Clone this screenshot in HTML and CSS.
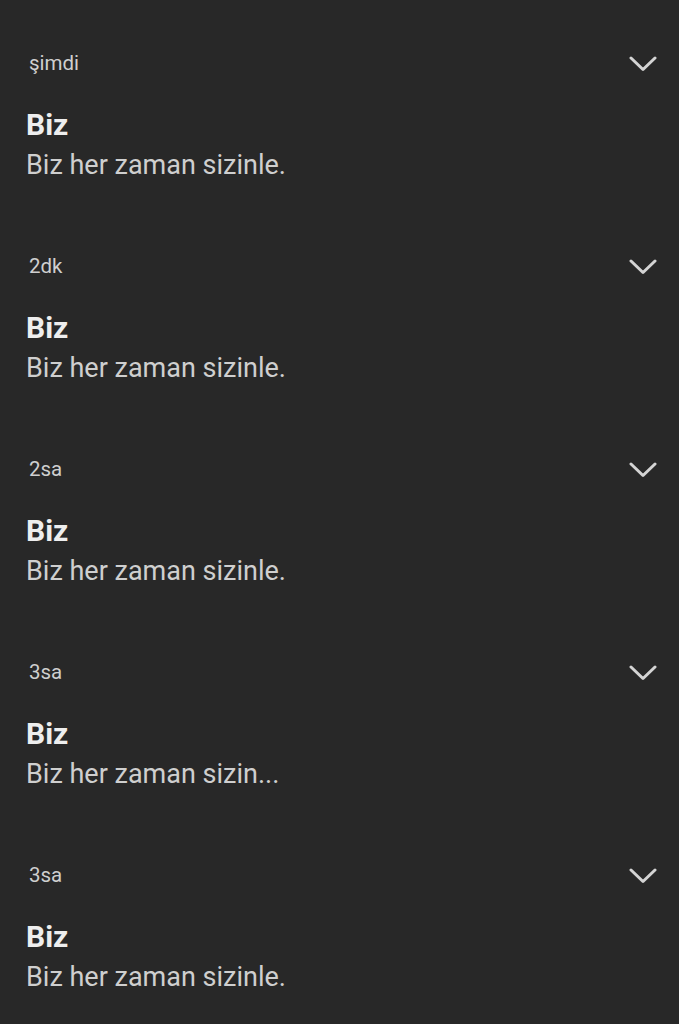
FILE: index.html
```html
<!DOCTYPE html>
<html lang="tr">
<head>
<meta charset="utf-8">
<link rel="stylesheet" href="styles.css">
</head>
<body>
<ul class="list">
  <li class="item">
    <div class="head"><span class="time">şimdi</span><svg class="chev" viewBox="0 0 28 16"><path d="M2 2 L14 13.5 L26 2"/></svg></div>
    <div class="title">Biz</div>
    <div class="text">Biz her zaman sizinle.</div>
  </li>
  <li class="item">
    <div class="head"><span class="time">2dk</span><svg class="chev" viewBox="0 0 28 16"><path d="M2 2 L14 13.5 L26 2"/></svg></div>
    <div class="title">Biz</div>
    <div class="text">Biz her zaman sizinle.</div>
  </li>
  <li class="item">
    <div class="head"><span class="time">2sa</span><svg class="chev" viewBox="0 0 28 16"><path d="M2 2 L14 13.5 L26 2"/></svg></div>
    <div class="title">Biz</div>
    <div class="text">Biz her zaman sizinle.</div>
  </li>
  <li class="item">
    <div class="head"><span class="time">3sa</span><svg class="chev" viewBox="0 0 28 16"><path d="M2 2 L14 13.5 L26 2"/></svg></div>
    <div class="title">Biz</div>
    <div class="text">Biz her zaman sizin...</div>
  </li>
  <li class="item">
    <div class="head"><span class="time">3sa</span><svg class="chev" viewBox="0 0 28 16"><path d="M2 2 L14 13.5 L26 2"/></svg></div>
    <div class="title">Biz</div>
    <div class="text">Biz her zaman sizinle.</div>
  </li>
</ul>
</body>
</html>
```
FILE: styles.css
```css
html, body {
  margin: 0;
  padding: 0;
  background: #282828;
}
body {
  font-family: Roboto, "Liberation Sans", sans-serif;
  width: 679px;
  height: 1024px;
  overflow: hidden;
}
.list {
  list-style: none;
  margin: 0;
  padding: 0;
}
.item {
  padding: 43px 22px 18px 26px;
  height: 142px;
}
.head {
  display: flex;
  align-items: center;
  justify-content: space-between;
  height: 40px;
  margin-bottom: 24px;
}
.time {
  font-size: 20.5px;
  line-height: 40px;
  color: #cfcfcf;
  padding-left: 3px;
}
.chev {
  width: 28px;
  height: 16px;
  margin-top: 2px;
  fill: none;
  stroke: #d4d4d4;
  stroke-width: 3;
  stroke-linecap: round;
  stroke-linejoin: round;
}
.title {
  font-size: 30px;
  font-weight: 700;
  line-height: 36px;
  color: #eeeeee;
}
.text {
  margin-top: 2px;
  font-size: 27px;
  line-height: 40px;
  color: #cfcfcf;
}
```
